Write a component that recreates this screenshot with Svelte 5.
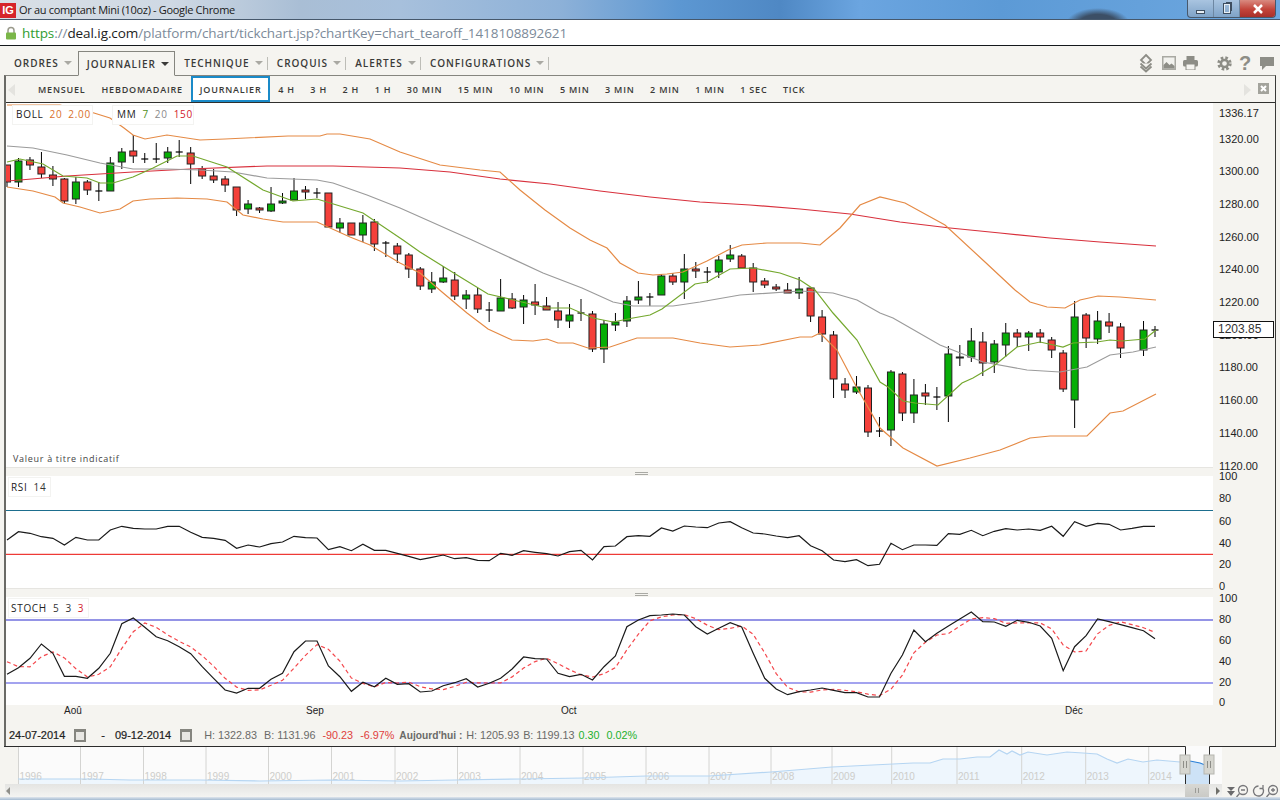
<script>
	const X0 = 7;
	const STEP = 11.48;
	const xAt = (i) => X0 + STEP * i;
	const pts = (list) => list.map((p) => p.join(',')).join(' ');

	// wick top, wick bottom, body top, body bottom, kind (r, g or d for doji)
	const candles = [
		[165,187,165,182,'r'],[158,187,161,182,'g'],[157,170,160,165,'r'],[152,178,167,174,'r'],[166,186,175,179,'r'],
		[178,204,179,201,'r'],[177,204,182,199,'g'],[180,195,182,190,'r'],[182,201,191,191,'d'],[157,191,163,191,'g'],
		[148,169,152,162,'g'],[135,163,151,156,'r'],[153,163,159,159,'d'],[143,163,159,159,'d'],[147,163,152,158,'g'],
		[140,157,152,152,'d'],[147,184,153,164,'r'],[166,179,169,176,'r'],[169,183,176,180,'r'],[176,192,179,185,'r'],
		[187,216,187,210,'r'],[200,214,204,209,'g'],[207,213,208,210,'r'],[187,212,204,211,'g'],[193,204,201,203,'g'],
		[178,200,191,200,'g'],[186,199,190,192,'r'],[188,198,193,193,'d'],[193,227,193,227,'r'],[218,233,223,228,'g'],
		[223,235,223,235,'r'],[215,242,223,235,'g'],[219,251,222,244,'r'],[241,257,243,243,'d'],[243,263,246,254,'r'],
		[253,278,255,269,'r'],[267,290,269,286,'r'],[272,293,282,289,'g'],[266,283,278,282,'g'],[272,300,280,296,'r'],
		[290,309,295,299,'g'],[288,313,295,309,'r'],[302,322,310,310,'d'],[279,311,298,311,'g'],[293,309,299,308,'r'],
		[295,324,300,307,'g'],[284,315,302,305,'r'],[297,310,306,310,'r'],[302,328,311,320,'r'],[304,328,315,321,'g'],
		[299,321,313,313,'d'],[311,352,314,349,'r'],[320,363,324,349,'g'],[313,331,322,325,'g'],[296,327,301,321,'g'],
		[281,304,297,300,'g'],[293,306,297,297,'d'],[274,295,276,295,'g'],[273,285,276,282,'r'],[254,299,269,282,'g'],
		[262,278,269,271,'r'],[267,283,272,272,'d'],[256,278,260,272,'g'],[245,262,255,259,'g'],[254,269,256,268,'r'],
		[263,292,268,282,'r'],[278,288,281,285,'r'],[284,291,287,289,'r'],[283,293,290,293,'r'],[277,299,289,293,'g'],
		[288,322,288,316,'r'],[310,342,317,334,'r'],[331,398,335,379,'r'],[378,398,384,390,'r'],[376,394,387,392,'g'],
		[385,437,388,432,'r'],[417,437,431,431,'d'],[370,446,372,430,'g'],[372,421,374,413,'r'],[379,423,395,413,'g'],
		[384,405,393,396,'r'],[387,410,397,397,'d'],[346,422,354,396,'g'],[345,366,357,358,'g'],[328,362,341,357,'g'],
		[332,376,342,363,'r'],[340,373,344,362,'g'],[323,357,333,345,'g'],[329,347,333,337,'r'],[331,351,333,337,'g'],
		[329,343,333,337,'r'],[337,358,340,350,'r'],[350,392,353,389,'r'],[301,428,317,400,'g'],[313,348,315,338,'r'],
		[311,344,321,339,'g'],[313,333,322,326,'r'],[323,358,327,348,'r'],null,[321,356,330,350,'g'],
		[326,337,330,330,'d']
	];

	const bandUp = [[7,105],[60,105],[94,113],[110,118],[124,128],[133,135],[145,139],[167,135],[200,140],[225,139],[288,136],[320,136],[327,134],[340,134],[370,139],[400,152],[440,165],[480,170],[500,172],[520,190],[545,210],[570,228],[590,240],[607,248],[620,263],[638,273],[653,275],[667,274],[683,272],[707,261],[728,250],[742,245],[767,243],[800,243],[820,245],[840,228],[860,205],[880,197],[905,203],[945,225],[985,262],[1015,290],[1030,302],[1047,307],[1065,308],[1080,300],[1098,296],[1120,297],[1156,300]];
	const bandDown = [[7,187],[33,191],[55,197],[63,203],[80,207],[100,213],[120,209],[133,201],[150,199],[177,198],[207,199],[227,202],[243,215],[263,219],[283,222],[317,222],[328,227],[350,237],[370,245],[400,263],[420,273],[442,292],[467,313],[488,329],[512,340],[533,341],[547,339],[558,343],[573,343],[588,348],[610,347],[637,338],[657,338],[673,338],[700,343],[730,347],[760,345],[800,337],[812,337],[820,333],[837,350],[857,388],[880,428],[903,448],[937,466],[970,458],[1000,450],[1030,438],[1050,436],[1087,436],[1110,413],[1123,411],[1156,394]];
	const ma20 = [[7,146],[33,148],[67,155],[100,163],[133,169],[167,169],[200,170],[233,172],[267,178],[317,180],[333,183],[367,195],[400,208],[472,240],[500,253],[543,273],[582,288],[613,302],[633,306],[673,306],[700,302],[740,295],[800,291],[833,293],[857,300],[880,313],[893,318],[940,345],[983,362],[1027,370],[1060,372],[1087,367],[1110,355],[1133,352],[1156,347]];
	const ma7 = [[7,162],[20,159],[43,164],[63,176],[87,178],[100,183],[113,183],[133,177],[153,168],[177,156],[193,156],[227,167],[263,190],[293,201],[317,199],[363,213],[403,240],[420,252],[457,275],[488,294],[547,308],[570,308],[593,318],[613,322],[633,318],[650,315],[662,309],[695,284],[707,282],[730,269],[753,268],[780,273],[800,280],[815,290],[833,313],[857,340],[880,382],[888,387],[903,401],[915,403],[938,405],[962,383],[973,378],[995,365],[1017,347],[1040,342],[1063,347],[1073,343],[1097,342],[1110,340],[1122,341],[1145,339],[1156,330]];
	const ma150 = [[7,181],[20,180],[67,176],[133,172],[190,169],[267,166],[333,166],[400,168],[450,172],[500,179],[550,184],[600,191],[650,197],[700,202],[750,205],[800,209],[850,214],[900,222],[950,228],[1000,233],[1050,238],[1100,242],[1156,246]];

	// indicator series, sampled once per candle (y in page pixels * 3, from y 465)
	const rsiRaw = [225,200,205,215,220,240,217,225,225,195,184,190,192,192,184,184,202,217,220,226,250,240,246,236,231,214,218,219,254,245,257,238,256,256,265,274,284,277,270,281,278,286,287,265,271,257,262,266,273,260,256,285,245,243,215,212,214,189,198,183,186,188,174,170,188,204,207,213,218,212,242,257,285,290,284,302,298,235,254,240,240,241,206,208,196,212,199,191,195,192,196,184,214,170,184,175,178,195,190,184,184];
	const kRaw = [628,608,580,537,565,634,634,640,610,565,476,459,487,515,527,545,566,605,640,675,684,670,670,643,625,560,528,528,603,635,679,652,665,640,658,656,681,678,662,653,641,666,655,640,612,576,581,582,625,635,628,645,605,573,485,465,452,450,447,450,485,507,490,473,486,565,640,672,689,680,675,669,676,683,683,696,696,625,570,495,530,505,483,462,441,470,471,484,466,472,483,520,617,545,512,462,470,479,488,497,521];
	const seriesPts = (raw) => raw.map((v, i) => `${xAt(i).toFixed(1)},${(465 + v / 3).toFixed(1)}`).join(' ');
	const dRaw = kRaw.map((v, i) => (i < 2 ? [590, 605][i] : (v + kRaw[i - 1] + kRaw[i - 2]) / 3));

	const priceTicks = [['1336.17',113],['1320.00',139],['1300.00',171],['1280.00',204],['1260.00',237],['1240.00',269],['1220.00',302],['1200.00',335],['1180.00',367],['1160.00',400],['1140.00',433],['1120.00',466]];
	const rsiTicks = [['100',476],['80',498],['60',521],['40',543],['20',564],['0',586]];
	const stochTicks = [['100',598],['80',619],['60',640],['40',661],['20',682],['0',702]];
	const axisTicks = [...priceTicks, ...rsiTicks, ...stochTicks];

	const menuItems = [
		{ label: 'ORDRES' },
		{ label: 'JOURNALIER', active: true },
		{ label: 'TECHNIQUE', sep: true },
		{ label: 'CROQUIS', sep: true },
		{ label: 'ALERTES', sep: true },
		{ label: 'CONFIGURATIONS', sep: true }
	];
	const periods = ['MENSUEL','HEBDOMADAIRE','JOURNALIER','4 H','3 H','2 H','1 H','30 MIN','15 MIN','10 MIN','5 MIN','3 MIN','2 MIN','1 MIN','1 SEC','TICK'];
	const months = [['Aoû',64],['Sep',306],['Oct',561],['Déc',1065]];

	const years = [[1996,18.5],[1997,80.5],[1998,143.5],[1999,206],[2000,268.5],[2001,331.5],[2002,395],[2003,457.5],[2004,520],[2005,583],[2006,646],[2007,709],[2008,771],[2009,832],[2010,891.7],[2011,957],[2012,1021.7],[2013,1085.7],[2014,1148.7]];
	const navLine = [[18,778],[90,778],[130,779],[200,779],[260,780],[330,779],[400,780],[455,779],[520,778],[583,777],[646,775],[709,775],[771,771],[832,766],[893,763],[913,762],[930,762],[943,758],[960,758],[977,756],[990,756],[999,749],[1007,753],[1012,750],[1020,754],[1028,751],[1047,754],[1067,751],[1083,752],[1097,753],[1107,758],[1117,762],[1128,758],[1143,761],[1157,759],[1180,761]];
	const navSel = [[1180,761],[1190,760],[1200,762],[1205,764],[1209,764]];
	const navArea = pts([...navLine, [1185, 761], [1185, 783], [18, 783]]);
	const selArea = pts([[1185, 761], ...navSel.slice(1), [1209, 783], [1185, 783]]);
</script>

<div class="window">
	<header class="titlebar">
		<span class="favicon">IG</span>
		<span class="title">Or au comptant Mini (10oz) - Google Chrome</span>
		<div class="controls">
			<span class="ctl"><i class="min"></i></span>
			<span class="ctl"><i class="restore"></i></span>
			<span class="ctl close">
				<svg width="12" height="10" viewBox="0 0 12 10"><path d="M2 1l8 8M10 1l-8 8" class="x-mark" /></svg>
			</span>
		</div>
	</header>

	<div class="addressbar">
		<svg class="lock" width="12" height="14" viewBox="0 0 12 14">
			<path d="M3 7V4.5a3 3 0 0 1 6 0V7" class="shackle" />
			<rect x="1" y="6.5" width="10" height="7" rx="1" class="lock-body" />
		</svg>
		<span class="url"><span class="scheme">https</span>://<span class="host">deal.ig.com</span>/platform/chart/tickchart.jsp?chartKey=chart_tearoff_1418108892621</span>
	</div>

	<div class="platform">
		<nav class="menu">
			{#each menuItems as item}
				<span class="menu-item" class:active={item.active} class:sep={item.sep}>
					{item.label}<i class="caret"></i>
				</span>
			{/each}
			<div class="tools">
				<svg width="14" height="20" viewBox="0 0 14 20" class="tool layers">
					<path d="M7 2l5 5-5 5-5-5z" />
					<path d="M1.5 10.500L7 15.500l5.500-5M1.5 13.500L7 18.500 12.500 13.500" />
				</svg>
				<svg width="14" height="14" viewBox="0 0 14 14" class="tool">
					<rect width="14" height="14" fill="#a9a9a2" />
					<rect x="1.5" y="1.5" width="11" height="11" fill="#f2f2ee" />
					<path d="M1.5 12.5V9l3-3 3 3 2-1.500 3 2.500v2.500z" fill="#8d8d86" />
				</svg>
				<svg width="15" height="14" viewBox="0 0 15 14" class="tool print">
					<rect x="3.500" y="0" width="8" height="4" fill="#8d8d86" />
					<rect x="0" y="4" width="15" height="6.500" rx="1.500" fill="#8d8d86" />
					<rect x="3" y="8" width="9" height="6" fill="#f5f4f0" stroke="#8d8d86" />
				</svg>
				<svg width="15" height="15" viewBox="0 0 15 15" class="tool gear">
					<circle cx="7.500" cy="7.500" r="5.700" class="gear-teeth" />
					<circle cx="7.500" cy="7.500" r="3.600" class="gear-ring" />
				</svg>
				<span class="help">?</span>
				<svg width="14" height="13" viewBox="0 0 14 13" class="tool">
					<path d="M0 0h14v9H6l-4 4V9H0z" fill="#8d8d86" />
				</svg>
			</div>
		</nav>

		<div class="frame">
			<div class="periods">
				<i class="arrow left"></i>
				{#each periods as period}
					<span class="period" class:selected={period === 'JOURNALIER'}>{period}</span>
				{/each}
				<i class="arrow right"></i>
				<span class="closebox">
					<svg width="11" height="11" viewBox="0 0 11 11"><path d="M3 3l5 5M8 3l-5 5" /></svg>
				</span>
			</div>

			<div class="charts">
				<div class="panes">
					<div class="pane main">
						<svg width="1207" height="364" viewBox="6 103 1207 364">
							{#each candles as c, i}
								{#if c}
									<line x1={xAt(i)} x2={xAt(i)} y1={c[0]} y2={c[1]} class="wick" />
									{#if c[4] === 'd'}
										<line x1={xAt(i) - 3.5} x2={xAt(i) + 3.5} y1={c[2]} y2={c[2]} class="doji" />
									{:else}
										<rect x={xAt(i) - 3.5} y={c[2]} width="7" height={c[3] - c[2]} class={c[4] === 'r' ? 'down' : 'up'} />
									{/if}
								{/if}
							{/each}
							<polyline points={pts(ma150)} class="l-ma150" />
							<polyline points={pts(ma20)} class="l-ma20" />
							<polyline points={pts(bandUp)} class="l-band" />
							<polyline points={pts(bandDown)} class="l-band" />
							<polyline points={pts(ma7)} class="l-ma7" />
						</svg>
						<div class="legend boll"><b>BOLL</b><em class="orange">20</em><em class="orange">2.00</em></div>
						<div class="legend mm"><b>MM</b><em class="green">7</em><em class="gray">20</em><em class="red">150</em></div>
						<div class="note">Valeur à titre indicatif</div>
					</div>
					<div class="divider"><i></i></div>
					<div class="pane rsi">
						<svg width="1207" height="112" viewBox="6 476 1207 112">
							<line x1="6" x2="1213" y1="510.5" y2="510.5" class="l-70" />
							<line x1="6" x2="1213" y1="553.5" y2="553.5" class="l-30-glow" />
							<line x1="6" x2="1213" y1="554.5" y2="554.5" class="l-30" />
							<polyline points={seriesPts(rsiRaw)} class="l-black" />
						</svg>
						<div class="legend small"><b>RSI</b><em>14</em></div>
					</div>
					<div class="divider"><i></i></div>
					<div class="pane stoch">
						<svg width="1207" height="108" viewBox="6 597 1207 108">
							<line x1="6" x2="1213" y1="620" y2="620" class="l-blue thick" />
							<line x1="6" x2="1213" y1="683" y2="683" class="l-blue" />
							<polyline points={seriesPts(dRaw)} class="l-dash" />
							<polyline points={seriesPts(kRaw)} class="l-black" />
						</svg>
						<div class="legend small"><b>STOCH</b><em>5</em><em>3</em><em class="red">3</em></div>
					</div>
				</div>
				<div class="axis">
					{#each axisTicks as tick}
						<span class="tick" style="top: {tick[1] - 103 - 7}px">{tick[0]}</span>
					{/each}
					<span class="last-price">1203.85</span>
				</div>
			</div>

			<div class="months">
				{#each months as m}
					<span style="left: {m[1] - 6}px">{m[0]}</span>
				{/each}
			</div>

			<div class="range">
				<span class="date">24-07-2014</span>
				<i class="cal"></i>
				<span class="date dash">-</span>
				<span class="date">09-12-2014</span>
				<i class="cal"></i>
				<span class="muted first">H: 1322.83</span>
				<span class="muted">B: 1131.96</span>
				<span class="loss">-90.23</span>
				<span class="loss">-6.97%</span>
				<span class="today">Aujourd'hui :</span>
				<span class="muted tight">H: 1205.93</span>
				<span class="muted tight">B: 1199.13</span>
				<span class="gain tight">0.30</span>
				<span class="gain">0.02%</span>
			</div>
		</div>

		<div class="navigator">
			<svg width="1280" height="38" viewBox="0 745 1280 38">
				<rect x="18" y="745" width="1204" height="38" class="nav-bg" />
				<polygon points={navArea} class="nav-area" />
				<polygon points={selArea} class="nav-sel" />
				{#each years as y}
					<line x1={y[1]} x2={y[1]} y1="746" y2="783" class="nav-grid" />
					<text x={y[1] + 1} y="779" class="nav-year">{y[0]}</text>
				{/each}
				<polyline points={pts(navLine)} class="nav-line" />
				<polyline points={pts(navSel)} class="nav-line-sel" />
				<path d="M4 745.500H1185.500V783M1209.500 783V745.500H1276" class="nav-edge" />
				<g class="handle" transform="translate(1180 754)">
					<rect width="10" height="19" />
					<path d="M3.500 6v7M6.500 6v7" />
				</g>
				<g class="handle" transform="translate(1204 754)">
					<rect width="10" height="19" />
					<path d="M3.500 6v7M6.500 6v7" />
				</g>
			</svg>
		</div>

		<div class="scroller">
			<div class="track">
				<i class="sc-left"></i>
				<span class="thumb"><i></i></span>
				<i class="sc-right"></i>
			</div>
			<svg width="52" height="14" viewBox="0 0 52 14" class="zoomers">
				<path d="M0 3h8L4 7zM0 7h8l-4 5z" class="fill" />
				<circle cx="16" cy="6" r="4.500" />
				<path d="M12.500 9.500L9.500 13M14 6h4" />
				<path d="M31.500 2a5 5 0 1 0 4 2M36 1v3.500h-3.500" />
				<circle cx="46" cy="6" r="4.500" />
				<path d="M42.500 9.500L39.500 13M44 6h4M46 4v4" />
			</svg>
		</div>
	</div>
	<div class="screen-edge"></div>
</div>

<style>
	:global(body) {
		margin: 0;
		background: #f5f4f0;
	}
	.window {
		width: 1280px;
		height: 800px;
		display: flex;
		flex-direction: column;
		overflow: hidden;
		font-family: "Liberation Sans", Arial, sans-serif;
	}

	.titlebar {
		height: 19px;
		border-bottom: 1px solid #46586c;
		display: flex;
		align-items: center;
		position: relative;
		background:
			radial-gradient(ellipse 32px 16px at 1098px 24px, #3c4f66 0, #3c4f66 60%, transparent 100%),
			linear-gradient(90deg, #d9dfe6 0, #cfd9e4 170px, #a9bed5 300px, #a7c0dc 400px, #8db1d8 560px, #5c97d2 680px, #4f88c4 780px, #6ba5e0 860px, #5c9ad6 1000px, #6ea8e0 1280px);
	}
	.favicon {
		width: 16px;
		height: 15px;
		margin-top: 1px;
		background: #d6242a;
		color: #fff;
		font: bold 11px/15px "Liberation Sans", sans-serif;
		text-align: center;
	}
	.title {
		margin-left: 3px;
		font: 11px "Open Sans", sans-serif;
		letter-spacing: -0.32px;
		color: #1a1a1a;
	}
	.controls {
		position: absolute;
		right: 4px;
		top: 0;
		height: 18px;
		width: 89px;
		display: flex;
		border: 1px solid #47586c;
		border-top: 0;
		border-radius: 0 0 4px 4px;
		box-sizing: border-box;
		overflow: hidden;
		background: linear-gradient(#a9c4e0, #7fa3c8);
	}
	.ctl {
		width: 25px;
		display: flex;
		align-items: center;
		justify-content: center;
		border-right: 1px solid #6d87a2;
	}
	.ctl.close {
		flex: 1;
		border: 0;
		background: linear-gradient(#d98a80, #c3443a 55%, #a9302a);
	}
	.min {
		width: 7px;
		height: 2px;
		margin-top: 6px;
		background: #e8eef4;
		border: 1px solid #3e4e60;
	}
	.restore {
		width: 4px;
		height: 7px;
		border: 1px solid #e8eef4;
		outline: 1px solid #3e4e60;
		box-shadow: 2px -2px 0 0 #3e4e60;
	}
	.x-mark {
		fill: none;
		stroke: #fff;
		stroke-width: 2.5;
	}

	.addressbar {
		height: 25px;
		border-bottom: 1px solid #14181c;
		background: #fff;
		display: flex;
		align-items: center;
		padding-left: 5px;
	}
	.shackle {
		fill: none;
		stroke: #9a9a8c;
		stroke-width: 1.500;
	}
	.lock-body {
		fill: #7ab648;
	}
	.url {
		margin-left: 5px;
		font: 13.500px "Open Sans", sans-serif;
		color: #7c8a99;
		letter-spacing: -0.08px;
	}
	.scheme {
		color: #2f9c2f;
	}
	.host {
		color: #1c1c1c;
	}

	.platform {
		flex: 1;
		display: flex;
		flex-direction: column;
		background: #f5f4f0;
	}
	.menu {
		height: 29px;
		display: flex;
		align-items: flex-end;
		padding-left: 4px;
		font: 600 10px "Open Sans", sans-serif;
		letter-spacing: 0.95px;
		color: #3a3a38;
		position: relative;
		z-index: 1;
	}
	.menu-item {
		height: 24px;
		display: flex;
		align-items: center;
		padding: 0 6px 0 10px;
		box-sizing: border-box;
		white-space: nowrap;
	}
	.menu-item.active {
		height: 25px;
		margin: 0 0 -1px 0;
		padding: 0 5px 0 8px;
		background: #f5f4f0;
		border: 1px solid #85857f;
		border-bottom-color: #f5f4f0;
	}
	.menu-item.sep {
		padding: 0 0 0 9.300px;
	}
	.menu-item.sep::after {
		content: "";
		width: 1px;
		height: 13px;
		margin-left: 4px;
		background: #bdbdb7;
	}
	.caret {
		width: 0;
		height: 0;
		margin-left: 5px;
		border: 4px solid transparent;
		border-top: 4px solid #aaa9a3;
		border-bottom: 0;
	}
	.active .caret {
		border-top-color: #3a3a38;
	}
	.tools {
		position: absolute;
		right: 6px;
		top: 7px;
		display: flex;
		align-items: center;
		height: 20px;
	}
	.tool {
		display: block;
		margin-left: 9px;
	}
	.layers {
		fill: #f5f4f0;
		stroke: #8d8d86;
		stroke-width: 1.800;
	}
	.print {
		margin-left: 7px;
		margin-right: 10px;
	}
	.gear-teeth {
		fill: none;
		stroke: #8d8d86;
		stroke-width: 3;
		stroke-dasharray: 2.500 2;
	}
	.gear-ring {
		fill: #f5f4f0;
		stroke: #8d8d86;
		stroke-width: 2.500;
	}
	.help {
		margin-left: 7px;
		width: 12px;
		font: bold 20px "Liberation Sans", sans-serif;
		color: #8d8d86;
	}

	.frame {
		margin: 0 4px;
		border-top: 1px solid #85857f;
		border-left: 2px solid #6a6a66;
		border-right: 1px solid #3a3a38;
		display: flex;
		flex-direction: column;
		width: 1269px;
		height: 670px;
	}
	.periods {
		height: 26px;
		border-bottom: 1px solid #2f2f2d;
		display: flex;
		align-items: stretch;
		font: 600 9px "Open Sans", sans-serif;
		letter-spacing: 0.8px;
		color: #3a3a38;
		position: relative;
		padding-left: 24px;
	}
	.period {
		display: flex;
		align-items: center;
		padding: 0 8px;
		white-space: nowrap;
	}
	.period.selected {
		padding: 0 7px;
		border: 2px solid #1a8ac8;
		background: #fff;
	}
	.selected ~ .period {
		padding: 0 7.750px;
	}
	.arrow {
		position: absolute;
		top: 8px;
		width: 0;
		height: 0;
		border: 5px solid transparent;
		border-width: 6px 7px;
	}
	.arrow.left {
		left: 2px;
		border-left: 0;
		border-right-color: #e4e3df;
	}
	.arrow.right {
		right: 24px;
		border-right: 0;
		border-left-color: #e4e3df;
	}
	.closebox {
		position: absolute;
		right: 6px;
		top: 7px;
		width: 11px;
		height: 11px;
		line-height: 0;
		background: #a3a39c;
	}
	.closebox path {
		fill: none;
		stroke: #fff;
		stroke-width: 2;
	}

	.charts {
		height: 602px;
		display: flex;
	}
	.panes {
		width: 1207px;
		display: flex;
		flex-direction: column;
	}
	.pane {
		position: relative;
		background: #fff;
		line-height: 0;
	}
	.pane svg {
		display: block;
	}
	.divider {
		height: 9px;
		background: #f5f4f0;
		border-top: 1px solid #e6e5e1;
		box-sizing: border-box;
		display: flex;
		justify-content: center;
		align-items: center;
		padding-left: 63px;
	}
	.divider i {
		width: 13px;
		height: 1px;
		margin-top: 2px;
		border-top: 1px solid #a9a9a4;
		border-bottom: 1px solid #a9a9a4;
	}

	.wick {
		stroke: #000;
		stroke-width: 1;
	}
	.doji {
		stroke: #000;
		stroke-width: 1.200;
	}
	.down {
		fill: #f4403a;
		stroke: #222;
		stroke-width: 1;
	}
	.up {
		fill: #06ae06;
		stroke: #222;
		stroke-width: 1;
	}
	polyline {
		fill: none;
		stroke-width: 1.200;
	}
	.l-band {
		stroke: #e58a45;
	}
	.l-ma20 {
		stroke: #9b9b9b;
	}
	.l-ma7 {
		stroke: #74a82e;
	}
	.l-ma150 {
		stroke: #d8303c;
	}
	.l-70 {
		stroke: #1d6e8e;
	}
	.l-30 {
		stroke: #ee3a36;
	}
	.l-30-glow {
		stroke: #fbd0ce;
	}
	.l-blue {
		stroke: #8484ea;
		stroke-width: 1.500;
	}
	.l-blue.thick {
		stroke: #9494e6;
		stroke-width: 2;
	}
	.l-black {
		stroke: #1a1a1a;
	}
	.l-dash {
		stroke: #f4474c;
		stroke-dasharray: 4 3;
	}

	.legend {
		position: absolute;
		top: 2px;
		height: 20px;
		box-sizing: border-box;
		background: #fff;
		border: 1px solid #f3f3f1;
		padding-bottom: 2px;
		display: flex;
		align-items: center;
		font: 10px/1 "Open Sans", sans-serif;
		letter-spacing: 0.7px;
		color: #222;
	}
	.legend b {
		font-weight: 400;
	}
	.legend em {
		font-style: normal;
		margin-left: 6px;
		color: #333;
	}
	.boll {
		left: 6px;
		width: 81px;
		padding-left: 3px;
	}
	.mm {
		left: 106px;
		width: 82px;
		padding-left: 4px;
	}
	.legend.small {
		left: 2px;
		top: 1px;
		padding: 0 4px 1px 2px;
	}
	.legend em.orange {
		color: #d9702a;
	}
	.legend em.green {
		color: #4f8f1c;
	}
	.legend em.gray {
		color: #8a8a8a;
	}
	.legend em.red {
		color: #d3202c;
	}
	.note {
		position: absolute;
		left: 7px;
		top: 351px;
		font: 9px/1 "Open Sans", sans-serif;
		letter-spacing: 0.7px;
		color: #444;
		white-space: nowrap;
	}

	.axis {
		width: 62px;
		position: relative;
		font-size: 11px;
		color: #222;
	}
	.tick {
		position: absolute;
		left: 6px;
		line-height: 14px;
	}
	.last-price {
		position: absolute;
		left: 0;
		top: 218px;
		width: 61px;
		height: 17px;
		box-sizing: border-box;
		padding-left: 4px;
		background: #fff;
		border: 1px solid #111;
		font-size: 12px;
		line-height: 15px;
		color: #333;
	}

	.months {
		height: 16px;
		position: relative;
		font-size: 10px;
		color: #222;
	}
	.months span {
		position: absolute;
		top: 0;
		line-height: 12px;
	}
	.range {
		height: 24px;
		display: flex;
		align-items: center;
		gap: 7px;
		padding: 4px 0 0 3px;
		box-sizing: border-box;
		font-size: 10.800px;
		white-space: nowrap;
	}
	.date {
		font-size: 11px;
		color: #222;
		-webkit-text-stroke: 0.2px #222;
	}
	.dash {
		margin: 0 3px 0 8px;
	}
	.cal {
		width: 8px;
		height: 8px;
		margin-left: 2px;
		border: 2px solid #85857f;
		border-top-width: 3px;
		background: #e8e7e3;
	}
	.muted {
		color: #6a6a68;
	}
	.first {
		margin-left: 5px;
	}
	.loss {
		color: #e0403c;
	}
	.today {
		margin-left: -2px;
		color: #6a6a68;
		font-weight: bold;
		font-size: 10.200px;
	}
	.tight {
		margin-left: -3px;
	}
	.gain {
		color: #22b02c;
	}

	.navigator {
		height: 38px;
		line-height: 0;
	}
	.nav-bg {
		fill: #fbfbfb;
	}
	.nav-area {
		fill: #eef6fd;
	}
	.nav-sel {
		fill: #cde2f6;
	}
	.nav-grid {
		stroke: #d4d4d2;
		stroke-width: 1;
	}
	.nav-year {
		font: 10px "Liberation Sans", sans-serif;
		fill: #cdcdca;
	}
	.nav-line {
		stroke: #b5d5f2;
	}
	.nav-line-sel {
		stroke: #2a80d8;
	}
	.nav-edge {
		fill: none;
		stroke: #2c2c2c;
		stroke-width: 1;
	}
	.handle rect {
		fill: #d6d6d0;
		stroke: #b6b6b0;
	}
	.handle path {
		stroke: #8d8d88;
		fill: none;
	}

	.scroller {
		height: 13px;
		display: flex;
		padding-left: 5px;
	}
	.track {
		width: 1217px;
		position: relative;
		background: linear-gradient(#e4e4e2, #f4f4f2);
	}
	.sc-left,
	.sc-right {
		position: absolute;
		top: 3px;
		width: 0;
		height: 0;
		border: 4px solid transparent;
	}
	.sc-left {
		left: 1px;
		border-left: 0;
		border-right-color: #8f8f8a;
	}
	.sc-right {
		right: 2px;
		border-right: 0;
		border-left-color: #6f6f6a;
	}
	.thumb {
		position: absolute;
		left: 1180px;
		top: 0;
		width: 24px;
		height: 13px;
		background: linear-gradient(#d8d8d4, #cacac6);
		display: flex;
		justify-content: center;
		align-items: center;
	}
	.thumb i {
		width: 2px;
		height: 5px;
		border-left: 1px solid #9b9b96;
		border-right: 1px solid #9b9b96;
	}
	.zoomers {
		margin-left: 5px;
		fill: none;
		stroke: #77777a;
		stroke-width: 1.300;
	}
	.zoomers .fill {
		fill: #6a6a6c;
		stroke: none;
	}
	.screen-edge {
		height: 3px;
		background: linear-gradient(#dfe5ec, #a4bbd2);
	}
</style>
